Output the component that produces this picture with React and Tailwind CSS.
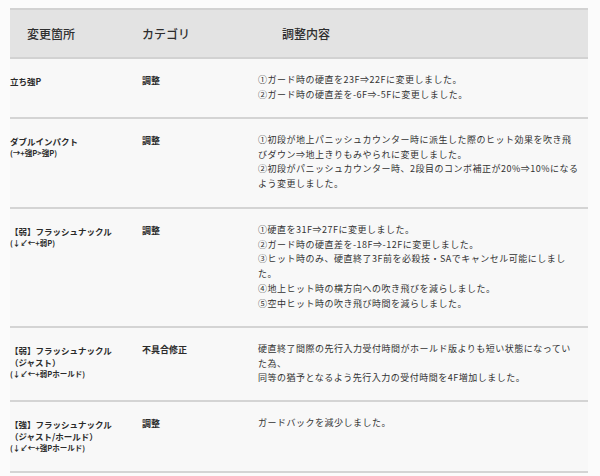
import React from "react";

const rows = [
  {
    name: ["立ち強P"],
    category: "調整",
    lines: ["①ガード時の硬直を23F⇒22Fに変更しました。", "②ガード時の硬直差を-6F⇒-5Fに変更しました。"],
    height: "h-[60px]",
  },
  {
    name: ["ダブルインパクト"],
    command: "(→+強P>強P)",
    category: "調整",
    lines: [
      "①初段が地上パニッシュカウンター時に派生した際のヒット効果を吹き飛",
      "びダウン⇒地上きりもみやられに変更しました。",
      "②初段がパニッシュカウンター時、2段目のコンボ補正が20%⇒10%になる",
      "よう変更しました。",
    ],
    height: "h-[90px]",
  },
  {
    name: ["【弱】フラッシュナックル"],
    command: "(↓↙←+弱P)",
    category: "調整",
    lines: [
      "①硬直を31F⇒27Fに変更しました。",
      "②ガード時の硬直差を-18F⇒-12Fに変更しました。",
      "③ヒット時のみ、硬直終了3F前を必殺技・SAでキャンセル可能にしまし",
      "た。",
      "④地上ヒット時の横方向への吹き飛びを減らしました。",
      "⑤空中ヒット時の吹き飛び時間を減らしました。",
    ],
    height: "h-[119px]",
  },
  {
    name: ["【弱】フラッシュナックル", "（ジャスト）"],
    command: "(↓↙←+弱Pホールド)",
    category: "不具合修正",
    lines: [
      "硬直終了間際の先行入力受付時間がホールド版よりも短い状態になってい",
      "た為、",
      "同等の猶予となるよう先行入力の受付時間を4F増加しました。",
    ],
    height: "h-[74px]",
  },
  {
    name: ["【強】フラッシュナックル", "（ジャスト/ホールド）"],
    command: "(↓↙←+強Pホールド)",
    category: "調整",
    lines: ["ガードバックを減少しました。"],
    height: "h-[71px]",
  },
];

const App = () => {
  return (
    <div
      className="w-[600px] h-[476px] overflow-hidden bg-[#fbfbfb] pt-[8px] pl-[10px]"
      style={{ fontFamily: '"Noto Sans CJK JP", "Noto Sans", sans-serif' }}
    >
      <div className="w-[578px]">
        {/* Header */}
        <div className="h-[51px] flex items-center bg-[#e3e3e3] border-t-2 border-b-2 border-[#d2d2d2] text-[12px] font-medium text-[#2e2e2e]">
          <div className="w-[132px] pl-[17px]">変更箇所</div>
          <div className="w-[116px]">カテゴリ</div>
          <div className="pl-[24px]">調整内容</div>
        </div>

        {/* Rows */}
        {rows.map((row, i) => (
          <div
            key={i}
            className={`${row.height} flex border-b-2 border-[#d4d4d4] bg-[#f8f8f8]`}
          >
            <div className="w-[132px] pt-[16px] text-[#2b2b2b] font-bold">
              {row.name.map((n) => (
                <div key={n} className="text-[8.5px] leading-[12px] whitespace-nowrap">
                  {n}
                </div>
              ))}
              {row.command && (
                <div className="text-[7.5px] leading-[12px] whitespace-nowrap">{row.command}</div>
              )}
            </div>
            <div className="w-[116px] pt-[14px] text-[9px] leading-[15px] font-bold text-[#2b2b2b]">
              {row.category}
            </div>
            <div className="pt-[14px] text-[#333]">
              {row.lines.map((l, j) => (
                <div key={j} className="text-[9px] leading-[14.7px] tracking-[0.5px] whitespace-nowrap">
                  {l}
                </div>
              ))}
            </div>
          </div>
        ))}
      </div>
    </div>
  );
};

export default App;
